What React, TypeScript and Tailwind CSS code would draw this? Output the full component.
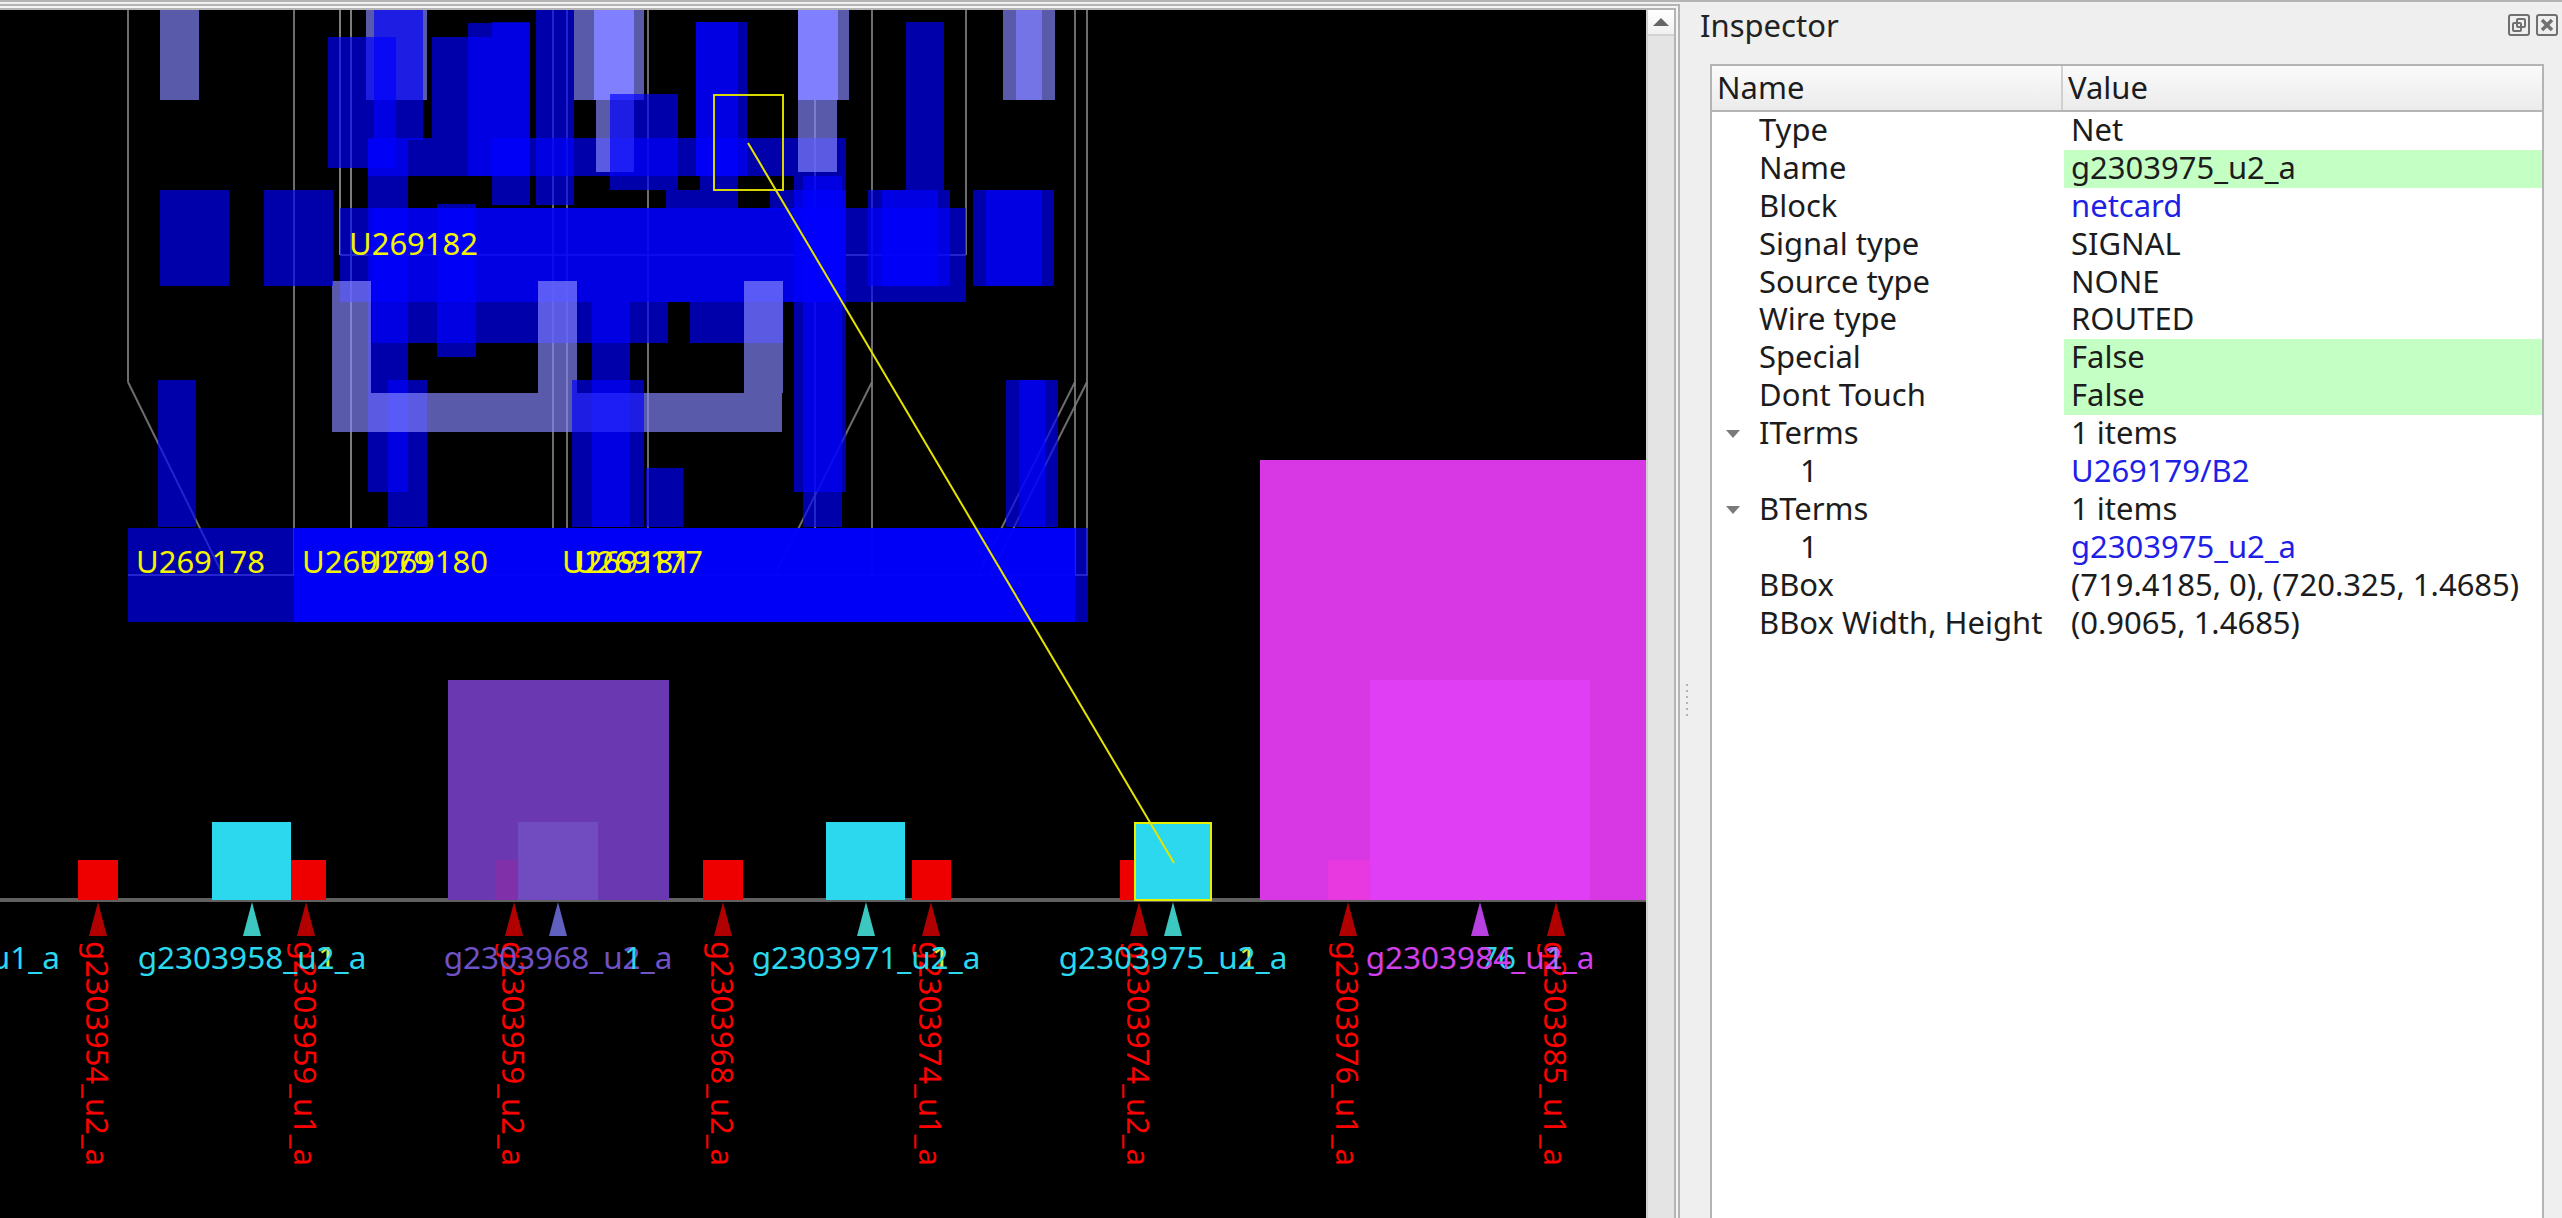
const FONT = { fontFamily: '"Noto Sans", sans-serif' };

// [x, y, w, h] of shapes on one layer of the layout view
type Box = [number, number, number, number];

const cellLines: [number, number, number, number][] = [
  [128, 10, 128, 382], [128, 382, 223, 575], [294, 10, 294, 575], [340, 10, 340, 255], [340, 10, 340, 255],
  [351, 10, 351, 528], [351, 10, 351, 528], [553, 10, 553, 528], [567, 10, 567, 528], [648, 10, 648, 528],
  [815, 100, 815, 528], [872, 10, 872, 575], [872, 382, 775, 575], [966, 10, 966, 255], [1075, 10, 1075, 575],
  [1087, 10, 1087, 575], [1075, 382, 978, 575], [1087, 382, 990, 575], [128, 575, 1088, 575], [340, 255, 966, 255],
];

const bluesUnder: Box[] = [
  [368, 138, 478, 38], [340, 208, 626, 94], [372, 208, 474, 94], [372, 302, 296, 41], [690, 302, 93, 41],
  [368, 140, 40, 352], [388, 380, 39, 147], [592, 302, 38, 225], [794, 176, 52, 316], [803, 176, 39, 351],
  [437, 204, 39, 153],
];

const lavender: Box[] = [
  [160, 10, 39, 90], [366, 10, 61, 90], [574, 10, 70, 90], [596, 100, 38, 72],
  [798, 10, 51, 90], [798, 100, 39, 72], [1003, 10, 52, 90],
  [332, 281, 39, 112], [538, 281, 39, 112], [744, 281, 39, 112], [332, 393, 450, 39],
];

const brightLavender: [number, number, number, number, string][] = [
  [594, 10, 40, 90, "#8080ff"], [798, 10, 40, 90, "#8080ff"], [1016, 10, 26, 90, "#7474e6"],
];

const bluesOver: Box[] = [
  [328, 37, 68, 131], [374, 10, 49, 130], [432, 37, 60, 101], [468, 23, 62, 153], [492, 22, 38, 183],
  [536, 10, 38, 195], [610, 94, 68, 96], [696, 22, 51, 154], [696, 22, 42, 154], [700, 176, 38, 32],
  [666, 190, 34, 18], [770, 190, 76, 20], [868, 190, 82, 96], [882, 190, 56, 96], [906, 22, 38, 168],
  [973, 190, 81, 96], [986, 190, 56, 96], [160, 190, 69, 96], [264, 190, 69, 96], [572, 380, 72, 147],
  [646, 468, 37, 59], [1006, 380, 52, 147], [1019, 380, 26, 147], [158, 380, 38, 147],
  [128, 528, 960, 94], [294, 528, 781, 94], [294, 528, 781, 94],
];

const redPins: [number, string][] = [
  [98, "g2303954_u2_a"], [306, "g2303959_u1_a"], [514, "g2303959_u2_a"], [723, "g2303968_u2_a"],
  [931, "g2303974_u1_a"], [1139, "g2303974_u2_a"], [1348, "g2303976_u1_a"], [1556, "g2303985_u1_a"],
];

const CYAN = "#2bd8ee";

const sidePins: [number, string, string, string][] = [
  [252, "g2303958_u2_a", CYAN, "#3cc8c0"],
  [558, "g2303968_u2_a", "#6f52c4", "#6060c0"],
  [866, "g2303971_u2_a", CYAN, "#3cc8c0"],
  [1173, "g2303975_u2_a", CYAN, "#3cc8c0"],
  [1480, "g2303984_u2_a", "#d040e8", "#b840e0"],
];

const yellowLabels: [number, number, string][] = [
  [349, 255, "U269182"], [136, 573, "U269178"], [302, 573, "U269179"], [359, 573, "U269180"],
  [562, 573, "U269181"], [574, 573, "U269177"],
];

function Blues({ items }: { items: Box[] }) {
  return (
    <>
      {items.map(([x, y, w, h], i) => (
        <rect key={i} x={x} y={y} width={w} height={h} fill="#0000ff" fillOpacity={0.67} />
      ))}
    </>
  );
}

function LayoutView() {
  return (
    <svg width={1646} height={1208} viewBox="0 10 1646 1208" className="block shrink-0 bg-black" style={FONT}>
      {cellLines.map(([x1, y1, x2, y2], i) => (
        <line key={i} x1={x1} y1={y1} x2={x2} y2={y2} stroke="#808080" strokeOpacity={0.85} strokeWidth={2} />
      ))}
      <Blues items={bluesUnder} />
      {lavender.map(([x, y, w, h], i) => (
        <rect key={i} x={x} y={y} width={w} height={h} fill="#8686ff" fillOpacity={0.67} />
      ))}
      {brightLavender.map(([x, y, w, h, c]) => (
        <rect key={x} x={x} y={y} width={w} height={h} fill={c} />
      ))}
      <Blues items={bluesOver} />

      {yellowLabels.map(([x, y, t]) => (
        <text key={t} x={x} y={y} fontSize={31} fill="#f4f400">{t}</text>
      ))}

      {/* die edge and pin shapes */}
      <rect x={0} y={898} width={1646} height={4} fill="#606060" />
      <rect x={78} y={860} width={40} height={40} fill="#ee0000" />
      <rect x={286} y={860} width={40} height={40} fill="#ee0000" />
      <rect x={703} y={860} width={40} height={40} fill="#ee0000" />
      <rect x={912} y={860} width={39} height={40} fill="#ee0000" />
      <rect x={1120} y={860} width={39} height={40} fill="#ee0000" />
      <rect x={212} y={822} width={79} height={78} fill={CYAN} />
      <rect x={826} y={822} width={79} height={78} fill={CYAN} />
      <rect x={1134} y={822} width={78} height={78} fill={CYAN} />
      <rect x={448} y={680} width={221} height={220} fill="#6a38b0" />
      <rect x={495} y={860} width={23} height={40} fill="#8030a8" />
      <rect x={518} y={822} width={80} height={78} fill="#704cc0" />
      <rect x={1260} y={460} width={386} height={440} fill="#d838e4" />
      <rect x={1328} y={860} width={42} height={40} fill="#e838e0" />
      <rect x={1370} y={680} width={220} height={220} fill="#e03ef4" />

      {/* highlighted net */}
      <rect x={714} y={95} width={69} height={95} fill="none" stroke="#d8d800" strokeWidth={2} />
      <rect x={1135} y={823} width={76} height={77} fill="none" stroke="#e8f000" strokeWidth={2} />
      <line x1={748} y1={143} x2={1174} y2={863} stroke="#e4e400" strokeWidth={2} />

      {redPins.map(([x, name]) => (
        <g key={x + name}>
          <polygon points={`${x},902 ${x - 9},936 ${x + 9},936`} fill="#b00000" />
          <text transform={`translate(${x - 12} 941) rotate(90)`} fontSize={31} fill="#ff0000">{name}</text>
        </g>
      ))}
      <text x={1480} y={969} fontSize={31.5} fill={CYAN}>76</text>
      {sidePins.map(([x, name, color, pin]) => (
        <g key={name}>
          <polygon points={`${x},902 ${x - 9},936 ${x + 9},936`} fill={pin} />
          {color === CYAN && <text x={x + 66} y={969} fontSize={31.5} fill="#d0f040">1</text>}
          <text x={x} y={969} fontSize={31.5} fill={color} textAnchor="middle">{name}</text>
          {color !== CYAN && (
            <text x={x + 66} y={969} fontSize={31.5} fill={x === 558 ? CYAN : "#a080f0"}>1</text>
          )}
        </g>
      ))}
      <text x={60} y={969} fontSize={31.5} fill={CYAN} textAnchor="end">g2303954_u1_a</text>
    </svg>
  );
}

type Row = { name: string; value: string; indent?: boolean; open?: boolean; green?: boolean; link?: boolean };

const rows: Row[] = [
  { name: "Type", value: "Net" },
  { name: "Name", value: "g2303975_u2_a", green: true },
  { name: "Block", value: "netcard", link: true },
  { name: "Signal type", value: "SIGNAL" },
  { name: "Source type", value: "NONE" },
  { name: "Wire type", value: "ROUTED" },
  { name: "Special", value: "False", green: true },
  { name: "Dont Touch", value: "False", green: true },
  { name: "ITerms", value: "1 items", open: true },
  { name: "1", value: "U269179/B2", indent: true, link: true },
  { name: "BTerms", value: "1 items", open: true },
  { name: "1", value: "g2303975_u2_a", indent: true, link: true },
  { name: "BBox", value: "(719.4185, 0), (720.325, 1.4685)" },
  { name: "BBox Width, Height", value: "(0.9065, 1.4685)" },
];

function Inspector() {
  return (
    <div className="flex min-w-0 flex-1 flex-col" style={FONT}>
      <div className="flex h-[62px] items-start justify-between pl-[20px] pr-[4px] pt-[6px]">
        <span className="text-[31px] leading-[34px] text-[#222]">Inspector</span>
        <div className="flex gap-[6px] pt-[6px]">
          <svg width={22} height={22} viewBox="0 0 22 22" fill="none" stroke="#707070" strokeWidth={2}>
            <rect x={1} y={1} width={20} height={20} rx={2} />
            <rect x={9} y={5} width={8} height={8} rx={1} />
            <rect x={5} y={9} width={8} height={8} rx={1} />
          </svg>
          <svg width={22} height={22} viewBox="0 0 22 22" fill="none" stroke="#707070" strokeWidth={2}>
            <rect x={1} y={1} width={20} height={20} rx={2} />
            <path d="M6 6l10 10M16 6L6 16" strokeWidth={3.5} />
          </svg>
        </div>
      </div>
      <div className="flex min-h-0 flex-1">
        {/* dock splitter handle */}
        <div className="flex w-[30px] shrink-0 flex-col gap-[4px] pl-[6px] pt-[620px]">
          {[0, 1, 2, 3, 4, 5].map((i) => (
            <div key={i} className="h-[2px] w-[2px] bg-[#b4b4b4]" />
          ))}
        </div>
        <div className="mr-[18px] flex min-w-0 flex-1 flex-col border-2 border-b-0 border-[#b4b4b4] bg-white text-[31px] text-[#1c1c1c]">
          <div className="flex h-[46px] shrink-0 border-b-2 border-[#b4b4b4] bg-gradient-to-b from-[#fbfbfb] to-[#ebebeb] leading-[43px]">
            <div className="w-[351px] shrink-0 border-r-2 border-[#d0d0d0] pl-[5px]">Name</div>
            <div className="pl-[5px]">Value</div>
          </div>
          {rows.map((r, i) => (
            <div key={i} className="flex h-[37.9px] shrink-0 leading-[35px]">
              <div className={`relative w-[352px] shrink-0 ${r.indent ? "pl-[88px]" : "pl-[47px]"}`}>
                {r.open && (
                  <svg width={14} height={8} viewBox="0 0 14 8" className="absolute left-[14px] top-[15px]">
                    <path d="M0 0h14L7 8z" fill="#7a7a7a" />
                  </svg>
                )}
                {r.name}
              </div>
              <div className={`min-w-0 flex-1 whitespace-nowrap pl-[7px] ${r.green ? "bg-[#c4ffc4]" : ""} ${r.link ? "text-[#1f1fe6]" : ""}`}>
                {r.value}
              </div>
            </div>
          ))}
        </div>
      </div>
    </div>
  );
}

export default function App() {
  return (
    <div className="flex h-[1218px] w-[2562px] overflow-hidden border-t-2 border-[#b4b4b4] bg-[#efefef]">
      <div className="flex w-[1680px] shrink-0 flex-col pt-[2px]">
        <div className="flex min-h-0 flex-1 flex-col border-r-2 border-t-2 border-[#b4b4b4] bg-[#f4f4f4] pr-[2px] pt-[2px]">
          <div className="flex min-h-0 flex-1 border-r-2 border-t-2 border-[#b4b4b4]">
            <LayoutView />
            <div className="w-[2px] shrink-0 bg-[#d0d0d0]" />
            <div className="flex w-[26px] shrink-0 flex-col bg-[#e4e4e4]">
              <div className="flex h-[26px] items-center justify-center border-b-2 border-[#d2d2d2] bg-gradient-to-b from-white to-[#f0f0f0]">
                <svg width={16} height={8} viewBox="0 0 16 8">
                  <path d="M8 0l8 8H0z" fill="#666" />
                </svg>
              </div>
            </div>
          </div>
        </div>
      </div>
      <Inspector />
    </div>
  );
}
